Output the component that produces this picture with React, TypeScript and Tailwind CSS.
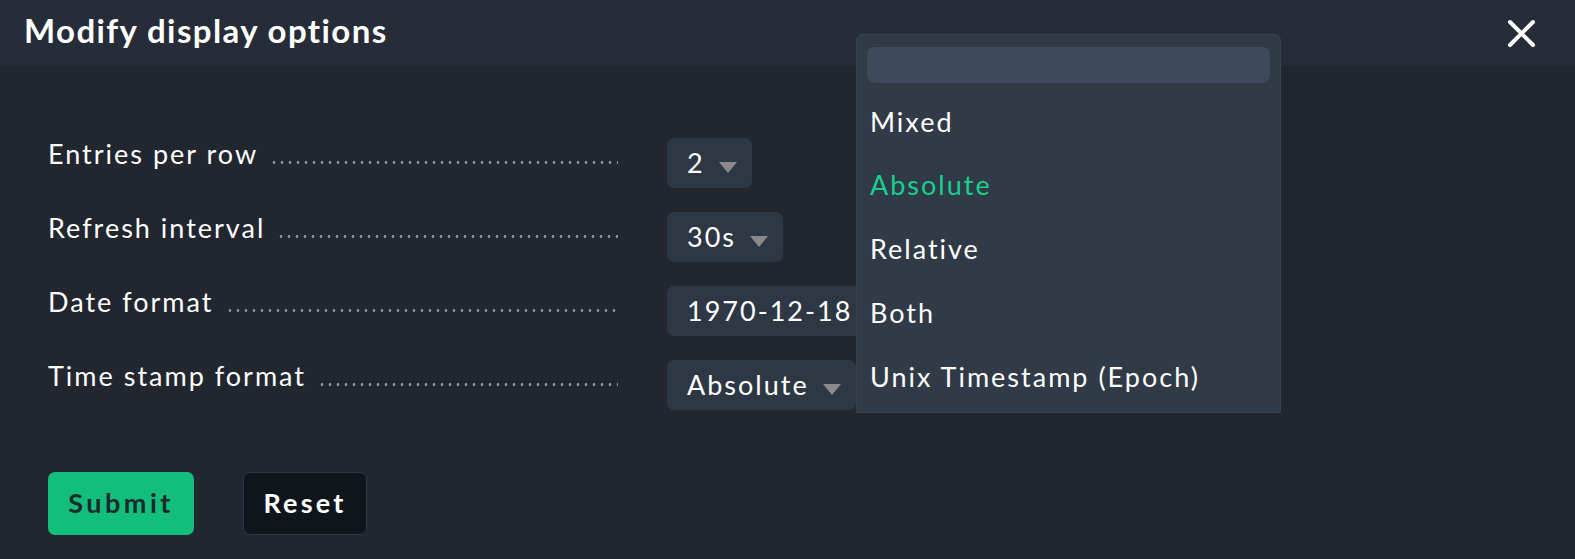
import React from 'react';

const rows = [
  { label: 'Entries per row', value: '2' },
  { label: 'Refresh interval', value: '30s' },
  { label: 'Date format', value: '1970-12-18' },
  { label: 'Time stamp format', value: 'Absolute' },
];

const options = ['Mixed', 'Absolute', 'Relative', 'Both', 'Unix Timestamp (Epoch)'];

function Caret() {
  return (
    <svg width="18" height="11" viewBox="0 0 18 11" className="shrink-0 mt-[9px]">
      <polygon points="0,0 18,0 9,11" fill="#8a8a8a" />
    </svg>
  );
}

export default function App() {
  return (
    <div className="relative w-[1575px] h-[559px] overflow-hidden bg-[#21262f] text-white font-['Lato','Noto_Sans',sans-serif]">
      {/* Header */}
      <div className="flex items-center justify-between h-[66px] bg-[#262d38] pl-[24px] pr-[39px]">
        <h1 className="text-[33px] font-bold leading-none tracking-[1.4px] pb-[5px]">Modify display options</h1>
        <button className="w-[29px] h-[29px]">
          <svg viewBox="0 0 29 29" width="29" height="29">
            <path d="M3 3 L26 26 M26 3 L3 26" stroke="#fff" strokeWidth="4" strokeLinecap="round" />
          </svg>
        </button>
      </div>

      {/* Form */}
      <div className="pl-[48px] pt-[72px]">
        <div className="flex flex-col gap-[24px]">
          {rows.map((r) => (
            <div key={r.label} className="flex items-start h-[50px]">
              <div className="flex items-end w-[570px] pt-[1px]">
                <span className="text-[27px] leading-[30px] tracking-[2px] whitespace-nowrap">{r.label}</span>
                <span className="flex-1 ml-[12px] mb-[5px] h-[3px] bg-[radial-gradient(circle,#8a9099_1.2px,transparent_1.6px)] bg-[length:8px_3px] bg-repeat-x" />
              </div>
              <div className="ml-[49px] flex items-center gap-[14px] h-[50px] pl-[20px] pr-[15px] rounded-[7px] bg-[#2e3744]">
                <span className="text-[27px] leading-none tracking-[2px] pb-[2px]">{r.value}</span>
                <Caret />
              </div>
            </div>
          ))}
        </div>

        <div className="flex gap-[49px] mt-[62px]">
          <button className="h-[63px] w-[146px] rounded-[7px] bg-[#13bd7b] text-[#1c2a2c] text-[27px] font-bold tracking-[3.5px]">
            Submit
          </button>
          <button className="h-[63px] w-[124px] rounded-[7px] bg-[#10151c] border-[1.5px] border-[#2f3743] text-white text-[27px] font-bold tracking-[3.2px]">
            Reset
          </button>
        </div>
      </div>

      {/* Dropdown menu */}
      <div className="absolute left-[856px] top-[34px] w-[425px] h-[379px] rounded-t-[7px] bg-[#313a47] border border-[#39424f] px-[10px] pt-[12px]">
        <div className="h-[36px] rounded-[8px] bg-[#3e4a5c]" />
        <ul className="mt-[7px]">
          {options.map((o) => (
            <li
              key={o}
              className={`h-[63.75px] flex items-center pl-[3px] text-[27px] tracking-[2px] ${o === 'Absolute' ? 'text-[#15d08f]' : 'text-white'}`}
            >
              {o}
            </li>
          ))}
        </ul>
      </div>
    </div>
  );
}
